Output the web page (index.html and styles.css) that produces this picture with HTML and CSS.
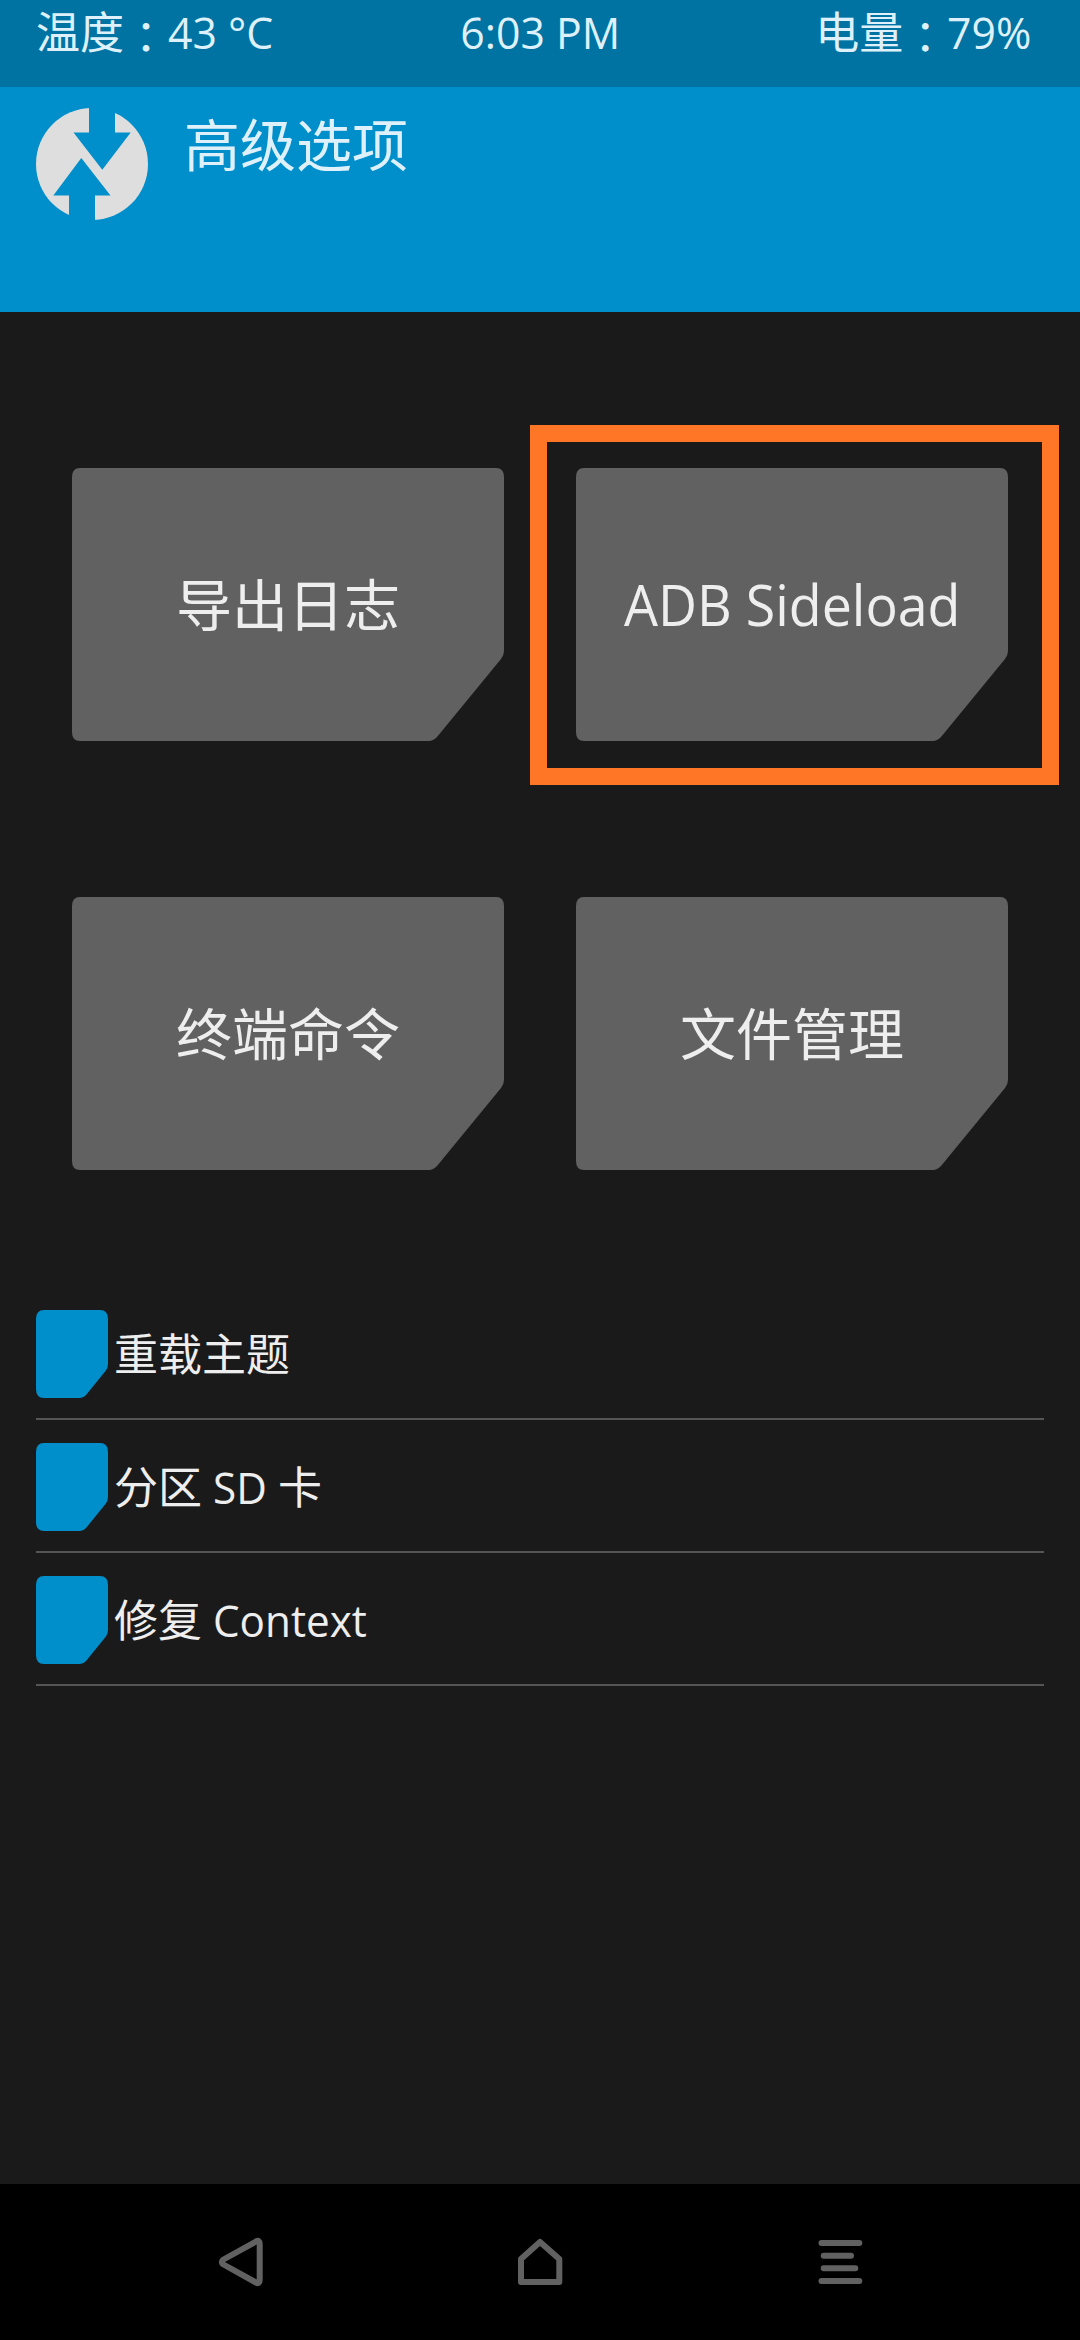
FILE: index.html
```html
<!DOCTYPE html>
<html lang="zh-CN">
<head>
<meta charset="utf-8">
<title>高级选项</title>
<link rel="stylesheet" href="styles.css">
</head>
<body>
<svg class="defs" width="0" height="0" aria-hidden="true">
  <symbol id="tile" viewBox="0 0 432 273"><path d="M8 0H424Q432 0 432 9V183Q432 187 429 191L365 269Q361 273 357 273H8Q0 273 0 264V9Q0 0 8 0Z"/></symbol>
  <symbol id="chip" viewBox="0 0 72 88"><path d="M8 0H64Q72 0 72 9V54Q72 58 69.500 61L50 85Q47.500 88 44 88H8Q0 88 0 79V9Q0 0 8 0Z"/></symbol>
</svg>
<div class="screen">
  <div class="status"><span class="st-left">温度<span class="colon" lang="zh-TW">：</span><span class="latin">43 °C</span></span><span class="st-mid latin">6:03 PM</span><span class="st-right">电量<span class="colon" lang="zh-TW">：</span><span class="latin">79%</span></span></div>
  <header class="header">
    <svg class="logo" viewBox="0 0 112 112"><circle cx="56" cy="56" r="56" fill="#dedede"/><path fill="#008fcb" d="M53 -1H79V24.500H94.700L66.300 61.700L37.500 24.500H53ZM59 113H33V87.500H17.300L45.300 50L74.500 87.500H59Z"/></svg>
    <h1 class="title">高级选项</h1>
  </header>
  <main class="main">
    <div class="grid">
      <button class="tile"><svg class="shape"><use href="#tile"/></svg><span class="label">导出日志</span></button>
      <button class="tile"><svg class="shape"><use href="#tile"/></svg><span class="label latin">ADB Sideload</span><i class="highlight"></i></button>
      <button class="tile"><svg class="shape"><use href="#tile"/></svg><span class="label">终端命令</span></button>
      <button class="tile"><svg class="shape"><use href="#tile"/></svg><span class="label">文件管理</span></button>
    </div>
    <ul class="list">
      <li class="row"><svg class="chip"><use href="#chip"/></svg><span class="row-text">重载主题</span></li>
      <li class="row"><svg class="chip"><use href="#chip"/></svg><span class="row-text">分区<span class="latin latin-inner"> SD </span>卡</span></li>
      <li class="row"><svg class="chip"><use href="#chip"/></svg><span class="row-text">修复<span class="latin"> Context</span></span></li>
    </ul>
  </main>
  <nav class="nav">
    <svg class="nav-icon" viewBox="-2 0 64 64"><path d="M46 11.500Q49.700 9.500 49.700 14V50Q49.700 54.500 46 52.500L13.500 34.500Q10 32 13.500 29.500Z"/></svg>
    <svg class="nav-icon" viewBox="0 0 64 64"><path d="M32 12L51.300 29V52H13V29Z"/></svg>
    <svg class="nav-icon" viewBox="0 0 64 64"><path d="M13.500 13H51.300M15.700 25.700H43M15.700 38.300H47.300M13.500 51H51.300"/></svg>
  </nav>
</div>
</body>
</html>
```

FILE: styles.css
```css
* { box-sizing: border-box; }
body { margin: 0; background: #1a1a1a; color: #eee; font-family: "Open Sans", "Noto Sans CJK SC", sans-serif; }
.defs { display: none; }
.screen { width: 1080px; height: 2340px; display: flex; flex-direction: column; }
/* Slightly condensed Latin text */
.latin { display: inline-block; white-space: pre; transform: scaleX(0.96); transform-origin: left; }
.latin-inner { margin-right: -3px; }
.colon { font-family: "Noto Sans CJK TC", sans-serif; line-height: 0; vertical-align: -5px; }
.status { height: 87px; flex: none; background: #0073a3; color: #def1fa; font-size: 44px; line-height: 64px; display: grid; grid-template-columns: 1fr auto 1fr; padding: 0 36px; white-space: nowrap; }
.status .latin { transform: scaleX(0.972); }
.status .st-mid { transform-origin: center; }
.st-right { text-align: right; padding-right: 10px; }
.header { height: 225px; flex: none; background: #008fcb; display: flex; gap: 36px; padding: 21px 36px; }
.logo { width: 112px; height: 112px; display: block; overflow: visible; }
.title { margin: 0; font-size: 56px; line-height: 73px; font-weight: 400; color: #def1fa; }
.main { flex: 1; }
.grid { display: grid; grid-template-columns: 432px 432px; grid-auto-rows: 273px; gap: 156px 72px; padding: 156px 72px 0; }
.tile { position: relative; display: grid; place-items: center; padding: 0; border: 0; background: none; color: inherit; font: 400 56px/76px "Open Sans", "Noto Sans CJK SC", sans-serif; }
.shape { grid-area: 1 / 1; width: 432px; height: 273px; fill: #616161; }
.label { grid-area: 1 / 1; z-index: 1; padding-bottom: 2px; white-space: nowrap; transform-origin: center; }
.highlight { position: absolute; left: -46px; top: -43px; width: 529px; height: 360px; border: 17px solid #ff7626; }
.list { list-style: none; margin: 140px 36px 0; padding: 0; }
.row { height: 110px; margin-bottom: 23px; border-bottom: 2px solid #555; display: flex; align-items: flex-start; gap: 6px; }
.chip { width: 72px; height: 88px; fill: #008fcb; }
.row-text { font-size: 44px; line-height: 88px; white-space: nowrap; }
.nav { height: 156px; flex: none; background: #000; display: grid; grid-template-columns: repeat(3, 300px); justify-content: center; place-items: center; }
.nav-icon { width: 64px; height: 64px; fill: none; stroke: #616161; stroke-width: 6; stroke-linecap: round; stroke-linejoin: round; }
```
